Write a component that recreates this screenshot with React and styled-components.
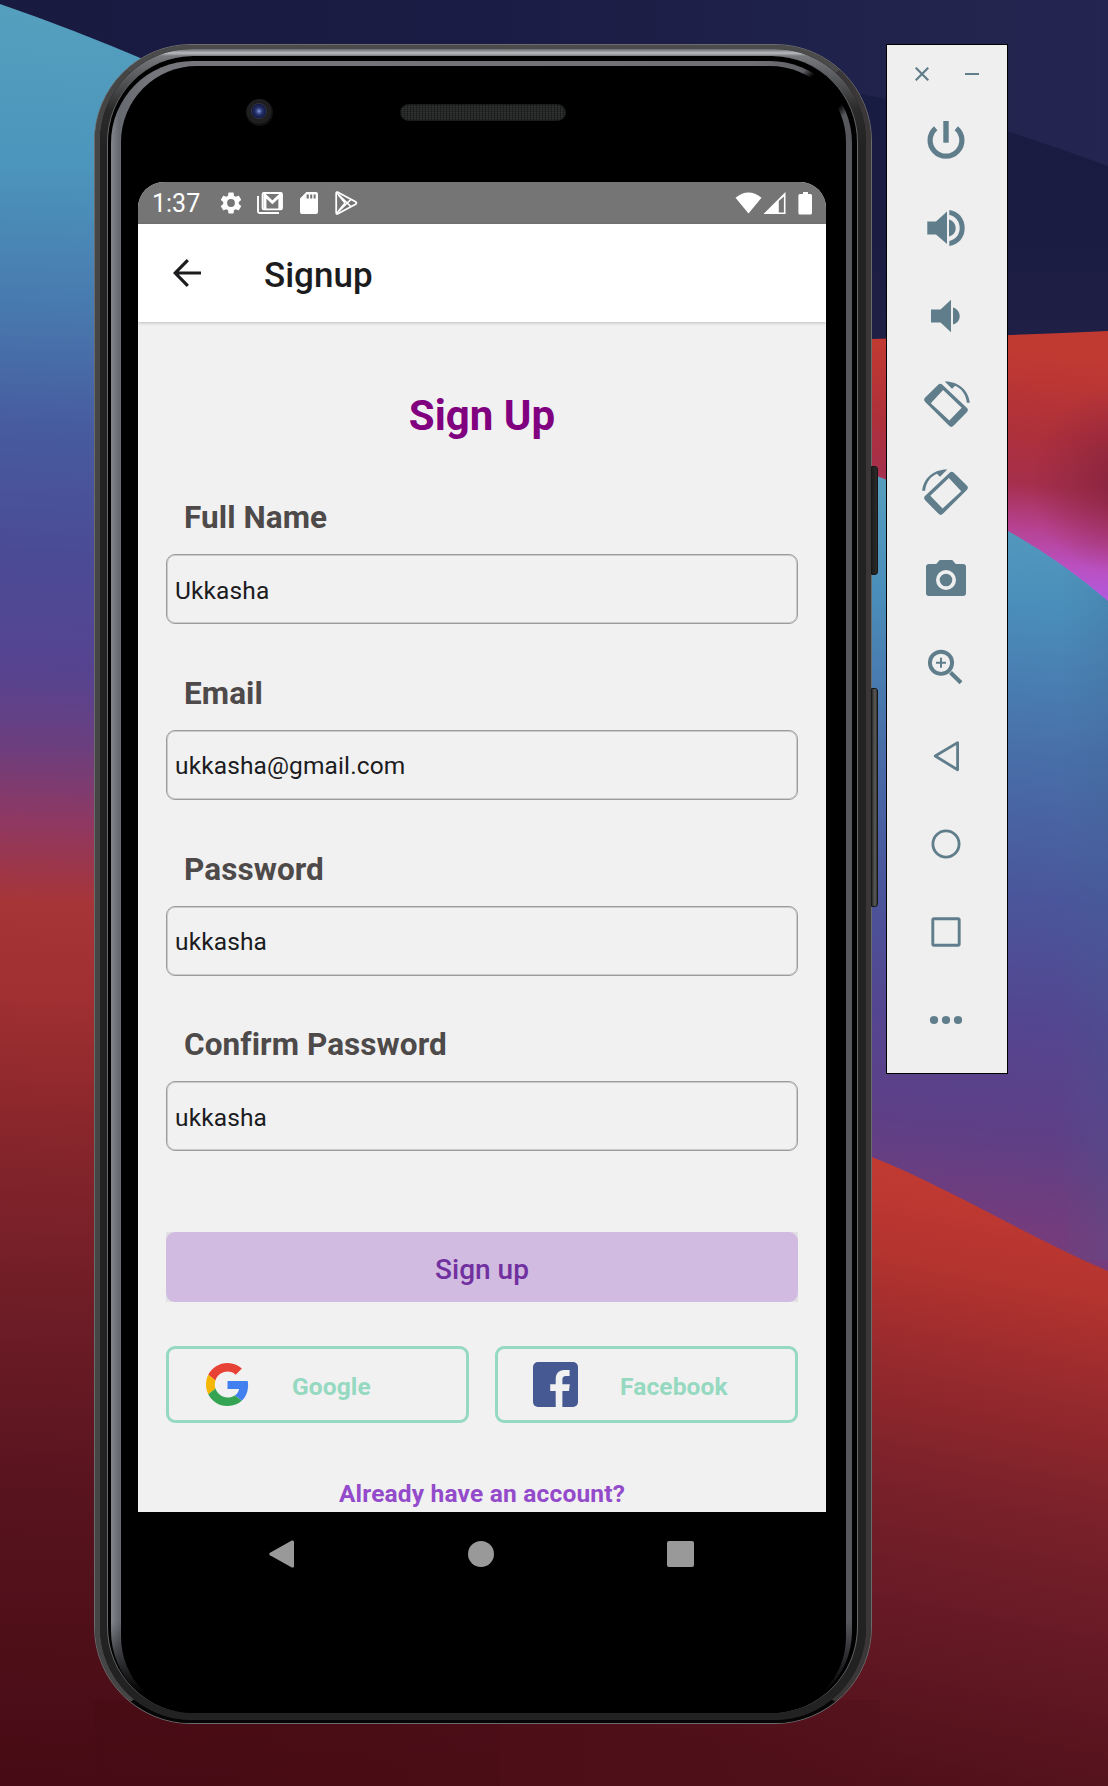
import React from "react";
import styled, { createGlobalStyle } from "styled-components";

const GlobalStyle = createGlobalStyle`
  *, *::before, *::after { box-sizing: border-box; }
  body { margin: 0; background: #1a1b42; font-family: Roboto, "Liberation Sans", sans-serif; }
  svg { display: block; flex: none; }
`;

const Desktop = styled.main`
  position: relative;
  display: flex;
  align-items: flex-start;
  gap: 14px;
  width: 1108px;
  height: 1786px;
  padding: 44px 0 0 94px;
  overflow: hidden;
`;

const WallpaperArt = styled.svg`
  position: absolute;
  inset: 0;
`;

/* ---------- Device shell ---------- */

const Device = styled.div`
  position: relative;
  flex: none;
  width: 778px;
  height: 1680px;
  display: flex;
`;

const Edge = styled.div`
  flex: 1;
  display: flex;
  border: 1px solid #6b6b6c;
  border-radius: 97px;
  background: #3a3738;
`;

const Casing = styled.div`
  flex: 1;
  display: flex;
  border-style: solid;
  border-width: 4px 5px 3px 5px;
  border-color: #4c4b4b #3b3738 #050505 #454545;
  border-radius: 96px;
  background: #1c1c1c;
`;

const Band = styled.div`
  flex: 1;
  display: flex;
  padding: 7px 8px 7px 7px;
  border-radius: 92px;
  background: linear-gradient(180deg, #66686c 0, #b9bbc0 4px, #77797d 7px, #2b2b2b 60px, #222 100px, #222 100%);
`;

const Groove = styled.div`
  flex: 1;
  display: flex;
  border-style: solid;
  border-width: 0 1px 0 1px;
  border-color: #000 #67696c #000 #67696c;
  border-radius: 86px;
  background: #000;
  padding: 5px 5px 0 3px;
`;

const Glass = styled.div`
  flex: 1;
  display: flex;
  border-radius: 82px;
  padding: 5px 6px 0 10px;
  background:
    radial-gradient(circle at 714px 31px, #000 20px, transparent 30px),
    linear-gradient(180deg, transparent 1560px, #000 1632px),
    linear-gradient(90deg, #83868a 0, #666970 8px, #75767b 40px, #707175 640px, #57585d 720px);
`;

const Face = styled.div`
  flex: 1;
  display: flex;
  flex-direction: column;
  border-radius: 76px;
  background: #000;
  padding: 0 20px 0 17px;
`;

const SideKey = styled.span`
  position: absolute;
  left: 777px;
  top: ${(p) => p.$top}px;
  width: 7px;
  height: ${(p) => p.$height}px;
  border-radius: 0 3px 3px 0;
  border: 1px solid #161616;
  background: ${(p) => p.$fill};
`;

const TopBezel = styled.div`
  height: 116px;
  flex: none;
  display: flex;
  align-items: flex-start;
  padding: 33px 0 0 108px;
`;

const Lens = styled.span`
  width: 27px;
  height: 27px;
  border-radius: 50%;
  background: radial-gradient(circle at 48% 45%, #8fa2d8 0, #45569a 2px, #232e62 4px, #141b45 7px, #34353a 7.5px, #1d1d1f 8.5px, #202022 12px, #111 13px);
`;

const Earpiece = styled.span`
  width: 166px;
  height: 17px;
  margin: 5px 0 0 127px;
  border-radius: 9px;
  border: 1px solid #1b1c1c;
  background: repeating-linear-gradient(90deg, rgba(0,0,0,.35) 0 1px, transparent 1px 3px),
    repeating-linear-gradient(0deg, #242626 0 1px, #303232 1px 2px);
`;

const Screen = styled.div`
  width: 688px;
  height: 1330px;
  flex: none;
  display: flex;
  flex-direction: column;
  overflow: hidden;
  border-radius: 26px 26px 0 0;
  background: #f1f1f1;
`;

const StatusBar = styled.div`
  height: 42px;
  flex: none;
  display: flex;
  align-items: center;
  padding: 0 13px 0 14px;
  background: #757575;
  color: #fff;
`;

const Clock = styled.span`
  font-size: 25px;
  line-height: 42px;
  width: 66px;
  padding-top: 2px;
`;

const StatusIcons = styled.div`
  display: flex;
  align-items: center;
  gap: ${(p) => p.$gap}px;
  margin-left: ${(p) => (p.$end ? "auto" : 0)};
`;

const AppBar = styled.header`
  position: relative;
  z-index: 1;
  height: 98px;
  flex: none;
  display: flex;
  align-items: center;
  padding-left: 35px;
  gap: 63px;
  background: #fff;
  box-shadow: 0 1px 3px rgba(0, 0, 0, 0.22);
`;

const AppTitle = styled.h1`
  margin: 6px 0 0;
  font-size: 35px;
  font-weight: 500;
  line-height: 42px;
  color: #1c1c1e;
`;

const Form = styled.form`
  display: flex;
  flex-direction: column;
  padding: 68px 28px 0;
`;

const FormTitle = styled.h2`
  margin: 0 0 56px;
  font-size: 42px;
  line-height: 52px;
  font-weight: 700;
  text-align: center;
  color: #800080;
`;

const Fields = styled.div`
  display: flex;
  flex-direction: column;
  gap: 49.8px;
`;

const Field = styled.label`
  display: flex;
  flex-direction: column;
  gap: 16px;
`;

const FieldLabel = styled.span`
  padding-left: 18px;
  font-size: 31.5px;
  line-height: 40px;
  letter-spacing: 0.08px;
  font-weight: 700;
  color: #4e4a4a;
`;

const TextInput = styled.input`
  width: 100%;
  height: 70px;
  margin: 0;
  padding: 2px 7px 0 8px;
  border: 1px solid #9b9b9b;
  border-radius: 9px;
  box-shadow: inset 0 0 0 1px rgba(150, 150, 150, 0.4);
  background: transparent;
  font: 400 24.5px Roboto, "Liberation Sans", sans-serif;
  letter-spacing: 0.12px;
  color: #1c1c1e;
  outline: none;
`;

const SubmitFrame = styled.div`
  margin-top: 81px;
  background: #e2e0e3;
`;

const SubmitButton = styled.button`
  display: block;
  width: 100%;
  height: 70px;
  padding: 4px 0 0;
  border: 0;
  border-radius: 9px;
  background: #d2bbe0;
  color: #7030a0;
  font: 500 28px Roboto, "Liberation Sans", sans-serif;
`;

const SocialRow = styled.div`
  display: flex;
  gap: 26px;
  margin-top: 43.5px;
`;

const SocialButton = styled.button`
  flex: 0 0 303px;
  display: flex;
  align-items: center;
  height: 77px;
  padding: 0 0 0 ${(p) => p.$inset}px;
  gap: ${(p) => p.$gap}px;
  border: 3px solid #96d9c1;
  border-radius: 9px;
  background: transparent;
  color: #96d9c1;
  font: 700 24.5px Roboto, "Liberation Sans", sans-serif;
  letter-spacing: 0.12px;
`;

const SocialText = styled.span`
  padding-top: 4px;
`;

const AccountLink = styled.a`
  margin-top: 56.5px;
  font-size: 24.5px;
  line-height: 30px;
  letter-spacing: 0.18px;
  font-weight: 700;
  text-align: center;
  color: #944bcb;
`;

const NavBar = styled.nav`
  height: 84px;
  width: 688px;
  flex: none;
  display: flex;
  justify-content: space-between;
  align-items: center;
  padding: 0 132px 0 131px;
`;

/* ---------- Emulator toolbar ---------- */

const Toolbar = styled.aside`
  position: relative;
  flex: none;
  width: 122px;
  height: 1030px;
  border: 1px solid #000;
  background: #efefef;
  color: #607d8b;
  display: flex;
  flex-direction: column;
  align-items: center;
`;

const WindowControls = styled.div`
  height: 51px;
  display: flex;
  align-items: center;
  gap: 36px;
  padding-top: 7px;
`;

const ToolButton = styled.button`
  width: 60px;
  height: 88px;
  flex: none;
  padding: 0;
  margin-right: 2px;
  border: 0;
  background: none;
  color: inherit;
  display: flex;
  align-items: center;
  justify-content: center;
`;

const Glyph = ({ children }) => (
  <svg width="60" height="60" viewBox="-30 -30 60 60" fill="currentColor">
    {children}
  </svg>
);

const RotateShape = () => (
  <>
    <path
      fillRule="evenodd"
      d="M-7.8 -19.2Q-5.7 -21.2 -3.6 -19.2L20.8 3.8Q23 6 20.8 8.2L7.5 21.8Q5.3 24 3.1 21.8L-20.8 -2Q-23 -4.2 -20.8 -6.4ZM-2.9 -14L-15.2 -.7L3.4 16.6L15.7 3.7Z"
    />
    <path d="M-1.3 -22.6C12 -23 22.5 -14 23.8 -1.3H20.9C20 -9.5 15.5 -15.5 9.2 -18.2L6 -15.2Z" />
  </>
);

const TOOLS = [
  ["Power", <>
    <path d="M-10.3 -11.8A15.9 15.9 0 1 0 10.3 -11.8" fill="none" stroke="currentColor" strokeWidth="5.2" />
    <path d="M-2.7 -19H2.7V2.7H-2.7Z" />
  </>],
  ["Volume up", <>
    <path d="M-18.7 -6.6H-10L1 -16.5V16L-10 6.5H-18.7Z" />
    <path d="M3 -8.6C7.2 -7.5 9.7 -4 9.7 0S7.2 7.5 3 8.6ZM3.3 -18C12.4 -16.9 18.7 -9.5 18.7 0S12.4 16.9 3.3 18V12.9C9.5 11.8 13.7 6.5 13.7 0S9.5 -11.8 3.3 -12.9Z" />
  </>],
  ["Volume down", <path d="M-15 -6.6H-5.5L5 -16.2V16.2L-5.5 6.6H-15ZM7 -8.6C11.2 -7.5 13.7 -4 13.7 0S11.2 7.5 7 8.6Z" />],
  ["Rotate left", <RotateShape />],
  ["Rotate right", <g transform="scale(-1 1)"><RotateShape /></g>],
  ["Take screenshot", <path fillRule="evenodd" d="M-6.2 -20H6.2L9.8 -16H17Q20 -16 20 -13V13Q20 16 17 16H-17Q-20 16 -20 13V-13Q-20 -16 -17 -16H-9.8ZM0 -10A10 10 0 1 0 0 10A10 10 0 1 0 0 -10ZM0 -6.3A6.3 6.3 0 1 1 0 6.3A6.3 6.3 0 1 1 0 -6.3Z" />],
  ["Zoom", <g fill="none" stroke="currentColor">
    <circle cx="-5" cy="-5.2" r="11.1" strokeWidth="3.9" />
    <path d="M-10 -5.2H0M-5 -10.2V-.2" strokeWidth="2" />
    <path d="M4.5 4.6L15 14.8" strokeWidth="4.2" />
  </g>],
  ["Back", <path d="M-10.8 0L11.6 -13.4V13.8Z" fill="none" stroke="currentColor" strokeWidth="2.8" strokeLinejoin="round" />],
  ["Home", <circle r="13.1" fill="none" stroke="currentColor" strokeWidth="2.8" />],
  ["Overview", <rect x="-13.2" y="-13.2" width="26.4" height="26.4" rx="1.2" fill="none" stroke="currentColor" strokeWidth="2.9" />],
  ["More", <><circle cx="-12" r="4.1" /><circle r="4.1" /><circle cx="12" r="4.1" /></>],
];

const FIELDS = [
  ["Full Name", "Ukkasha"],
  ["Email", "ukkasha@gmail.com"],
  ["Password", "ukkasha"],
  ["Confirm Password", "ukkasha"],
];

const Stops = ({ list }) => list.map(([offset, color]) => <stop key={offset} offset={offset} stopColor={color} />);

const Wallpaper = () => (
  <WallpaperArt width="1108" height="1786" viewBox="0 0 1108 1786" aria-hidden="true">
    <defs>
      <linearGradient id="night" gradientUnits="userSpaceOnUse" x1="0" y1="0" x2="1108" y2="0">
        <Stops list={[[0, "#181a40"], [0.45, "#1b1c45"], [0.7, "#1e2149"], [1, "#242651"]]} />
      </linearGradient>
      <linearGradient id="deep" gradientUnits="userSpaceOnUse" x1="0" y1="90" x2="0" y2="340">
        <Stops list={[[0, "#191c42"], [0.6, "#1a1c42"], [1, "#201f46"]]} />
      </linearGradient>
      <linearGradient id="leftWave" gradientUnits="userSpaceOnUse" x1="60" y1="0" x2="0" y2="1786">
        <Stops list={[[0, "#559fbe"], [0.09, "#4c96bd"], [0.17, "#487aaf"], [0.24, "#475b9e"], [0.31, "#4b4b95"], [0.375, "#564390"], [0.415, "#6a3f80"], [0.46, "#8f3862"], [0.505, "#a63538"], [0.56, "#9f2f31"], [0.64, "#86252b"], [0.74, "#6c1c26"], [0.84, "#57131e"], [1, "#460b14"]]} />
      </linearGradient>
      <linearGradient id="ember" gradientUnits="userSpaceOnUse" x1="872" y1="340" x2="850" y2="600">
        <Stops list={[[0, "#c13a32"], [0.3, "#ae303a"], [0.5, "#a52f4c"], [0.65, "#b5408a"], [0.8, "#ba50c0"], [0.92, "#b25ae0"]]} />
      </linearGradient>
      <radialGradient id="emberShade" gradientUnits="userSpaceOnUse" cx="1125" cy="480" r="95">
        <stop offset="0" stopColor="#7f213a" stopOpacity=".85" />
        <stop offset="1" stopColor="#8d2440" stopOpacity="0" />
      </radialGradient>
      <linearGradient id="rightWave" gradientUnits="userSpaceOnUse" x1="1000" y1="500" x2="930" y2="1220">
        <Stops list={[[0, "#559cbd"], [0.14, "#4a8ebb"], [0.35, "#486ea8"], [0.55, "#4a559a"], [0.72, "#544590"], [0.87, "#5e3f86"], [1, "#743c7c"]]} />
      </linearGradient>
      <linearGradient id="edgeShade" gradientUnits="userSpaceOnUse" x1="1060" y1="0" x2="1108" y2="0">
        <stop offset="0" stopColor="#3d6a90" stopOpacity="0" />
        <stop offset="1" stopColor="#3f628f" stopOpacity=".2" />
      </linearGradient>
      <linearGradient id="lava" gradientUnits="userSpaceOnUse" x1="1000" y1="1190" x2="880" y2="1786">
        <Stops list={[[0, "#c03a32"], [0.13, "#b5342f"], [0.32, "#95292d"], [0.5, "#7a212a"], [0.7, "#671a26"], [1, "#4f1019"]]} />
      </linearGradient>
      <linearGradient id="floor" gradientUnits="userSpaceOnUse" x1="94" y1="0" x2="880" y2="0">
        <Stops list={[[0, "#460b14"], [0.5, "#4b0d16"], [1, "#52111b"]]} />
      </linearGradient>
    </defs>
    <rect width="1108" height="1786" fill="url(#night)" />
    <path d="M500 50C700 60 900 95 1010 132Q1060 148 1108 166V340H500Z" fill="url(#deep)" />
    <path d="M0 4Q70 28 150 62L500 300V1786H0Z" fill="url(#leftWave)" />
    <path d="M500 350L872 339Q1000 336 1108 331V700H500Z" fill="url(#ember)" />
    <path d="M980 335L1108 331V620H980Z" fill="url(#emberShade)" />
    <path d="M700 420Q800 440 872 474Q890 481 1008 531Q1060 560 1108 601V1300H700Z" fill="url(#rightWave)" />
    <path d="M1060 565L1108 601V1260H1060Z" fill="url(#edgeShade)" />
    <path d="M700 1090L872 1157C950 1188 1030 1238 1108 1271V1786H500V1090Z" fill="url(#lava)" />
    <path d="M94 1700H880V1786H94Z" fill="url(#floor)" opacity=".6" />
  </WallpaperArt>
);

const GearIcon = () => (
  <svg width="26" height="26" viewBox="0 0 24 24" fill="currentColor">
    <path d="M19.14 12.94c.04-.3.06-.61.06-.94 0-.32-.02-.64-.07-.94l2.03-1.58c.18-.14.23-.41.12-.61l-1.92-3.32c-.12-.22-.37-.29-.59-.22l-2.39.96c-.5-.38-1.03-.7-1.62-.94l-.36-2.54c-.04-.24-.24-.41-.48-.41h-3.84c-.24 0-.43.17-.47.41l-.36 2.54c-.59.24-1.13.57-1.62.94l-2.39-.96c-.22-.08-.47 0-.59.22L2.74 8.87c-.12.21-.08.47.12.61l2.03 1.58c-.05.3-.09.63-.09.94s.02.64.07.94l-2.03 1.58c-.18.14-.23.41-.12.61l1.92 3.32c.12.22.37.29.59.22l2.39-.96c.5.38 1.03.7 1.62.94l.36 2.54c.05.24.24.41.48.41h3.84c.24 0 .44-.17.47-.41l.36-2.54c.59-.24 1.13-.56 1.62-.94l2.39.96c.22.08.47 0 .59-.22l1.92-3.32c.12-.22.07-.47-.12-.61l-2.01-1.58zM12 15.6A3.6 3.6 0 1 1 12 8.4a3.6 3.6 0 0 1 0 7.2z" />
  </svg>
);

const MailIcon = () => (
  <svg width="26" height="22" viewBox="0 0 26 22" fill="none" stroke="currentColor">
    <path d="M1 4V19.5Q1 21 2.5 21H22" strokeWidth="1.9" />
    <rect x="5.6" y="1" width="19.4" height="16.4" rx="1.4" strokeWidth="1.9" />
    <path d="M8 17V3.4L15.4 10.2L22.8 3.4V17" strokeWidth="2.9" />
  </svg>
);

const SdIcon = () => (
  <svg width="18" height="22" viewBox="0 0 18 22" fill="currentColor">
    <path fillRule="evenodd" d="M6.4 0H16Q18 0 18 2V20Q18 22 16 22H2Q0 22 0 20V6.6ZM6.6 2.4V6.6H8.8V2.4ZM10.2 2.4V6.6H12.2V2.4ZM13.6 2.4V6.6H15.6V2.4Z" />
  </svg>
);

const PlayIcon = () => (
  <svg width="23" height="24" viewBox="0 0 23 24" fill="none" stroke="currentColor" strokeWidth="1.8" strokeLinejoin="round">
    <path d="M1.2 2.4Q1.2 .6 2.8 1.2L20.6 10.8Q22.2 12 20.6 13.2L2.8 22.8Q1.2 23.4 1.2 21.6Z" />
    <path d="M1.6 1.8L16 15.6M1.6 22.2L16 8.4M10 12L3.4 4M10 12L3.4 20" strokeWidth="1.5" />
  </svg>
);

const GoogleLogo = () => (
  <svg width="43" height="43" viewBox="2.5 2 43 44">
    <g transform="translate(2 2) scale(.9167)">
      <path fill="#e74235" d="M24 9.5c3.54 0 6.71 1.22 9.21 3.6l6.85-6.85C35.9 2.38 30.47 0 24 0 14.62 0 6.51 5.38 2.56 13.22l7.98 6.19C12.43 13.72 17.74 9.5 24 9.5z" />
      <path fill="#4280ef" d="M46.98 24.55c0-1.57-.15-3.09-.38-4.55H24v9.02h12.94c-.58 2.96-2.26 5.48-4.78 7.18l7.73 6c4.51-4.18 7.09-10.36 7.09-17.65z" />
      <path fill="#f6b704" d="M10.53 28.59c-.48-1.45-.76-2.99-.76-4.59s.27-3.14.76-4.59l-7.98-6.19C.92 16.46 0 20.12 0 24c0 3.88.92 7.54 2.56 10.78l7.97-6.19z" />
      <path fill="#34a453" d="M24 48c6.48 0 11.93-2.13 15.89-5.81l-7.73-6c-2.15 1.45-4.92 2.3-8.16 2.3-6.26 0-11.57-4.22-13.47-9.91l-7.98 6.19C6.51 42.62 14.62 48 24 48z" />
    </g>
  </svg>
);

const FacebookLogo = () => (
  <svg width="45" height="45" viewBox="0 0 45 45">
    <rect width="45" height="45" rx="5" fill="#475993" />
    <path fill="#f1f1f1" d="M22.7 45V29H17.2V22.2H22.7V17.2C22.7 11.5 26 8 31 8H36.6V14H33C30.3 14 29.4 15.3 29.4 17.5V22.2H36.8L36 29H29.4V45Z" />
  </svg>
);

export default function App() {
  return (
    <>
      <GlobalStyle />
      <Desktop>
        <Wallpaper />
        <Device>
          <SideKey $top={422} $height={109} $fill="linear-gradient(90deg, #1d1d1d, #2b2b2b)" />
          <SideKey $top={644} $height={219} $fill="linear-gradient(90deg, #2a2a2a, #5c5c5a 60%, #333)" />
          <Edge><Casing><Band><Groove><Glass>
            <Face>
              <TopBezel><Lens /><Earpiece /></TopBezel>
              <Screen>
                <StatusBar>
                  <Clock>1:37</Clock>
                  <StatusIcons $gap={17}>
                    <StatusIcons $gap={13}><GearIcon /><MailIcon /></StatusIcons>
                    <SdIcon />
                    <PlayIcon />
                  </StatusIcons>
                  <StatusIcons $end $gap={0}>
                    <svg width="78" height="24" viewBox="0 0 78 24" fill="currentColor">
                      <path d="M0.5 6.8Q13.5 -3.6 26.5 6.8L13.5 22.5Z" />
                      <path fillRule="evenodd" d="M28.5 23L50.5 1V23ZM43.8 10V21.4H48.9V5.4Z" />
                      <path d="M68 1H73V3H75.5Q77 3 77 4.5V22Q77 23.5 75.5 23.5H64.9Q63.4 23.5 63.4 22V4.5Q63.4 3 64.9 3H68Z" />
                    </svg>
                  </StatusIcons>
                </StatusBar>
                <AppBar>
                  <svg width="28" height="28" viewBox="0 0 28 28" fill="none" stroke="#1c1c1e" strokeWidth="3.2">
                    <path d="M28 14H3M14.8 1.2L2.2 14L14.8 26.8" />
                  </svg>
                  <AppTitle>Signup</AppTitle>
                </AppBar>
                <Form onSubmit={(e) => e.preventDefault()}>
                  <FormTitle>Sign Up</FormTitle>
                  <Fields>
                    {FIELDS.map(([label, value]) => (
                      <Field key={label}>
                        <FieldLabel>{label}</FieldLabel>
                        <TextInput defaultValue={value} spellCheck={false} />
                      </Field>
                    ))}
                  </Fields>
                  <SubmitFrame><SubmitButton>Sign up</SubmitButton></SubmitFrame>
                  <SocialRow>
                    <SocialButton type="button" $inset={37} $gap={43}>
                      <GoogleLogo /><SocialText>Google</SocialText>
                    </SocialButton>
                    <SocialButton type="button" $inset={35} $gap={42}>
                      <FacebookLogo /><SocialText>Facebook</SocialText>
                    </SocialButton>
                  </SocialRow>
                  <AccountLink>Already have an account?</AccountLink>
                </Form>
              </Screen>
              <NavBar>
                <svg width="26" height="28" viewBox="0 0 26 28" fill="#999"><path d="M1 12.8L22.8 .5Q25 0 25 1.8V26.2Q25 28 22.8 27.5L1 15.2Q-.6 14 1 12.8Z" /></svg>
                <svg width="26" height="26" viewBox="0 0 26 26" fill="#999"><circle cx="13" cy="13" r="13" /></svg>
                <svg width="27" height="26" viewBox="0 0 27 26" fill="#999"><rect width="27" height="26" rx="2" /></svg>
              </NavBar>
            </Face>
          </Glass></Groove></Band></Casing></Edge>
        </Device>
        <Toolbar>
          <WindowControls>
            <svg width="14" height="14" viewBox="0 0 14 14" stroke="currentColor" strokeWidth="2.2"><path d="M.7 .7L13.3 13.3M13.3 .7L.7 13.3" /></svg>
            <svg width="14" height="14" viewBox="0 0 14 14" stroke="currentColor" strokeWidth="2"><path d="M0 7H14" /></svg>
          </WindowControls>
          {TOOLS.map(([name, art]) => (
            <ToolButton key={name} aria-label={name}><Glyph>{art}</Glyph></ToolButton>
          ))}
        </Toolbar>
      </Desktop>
    </>
  );
}
